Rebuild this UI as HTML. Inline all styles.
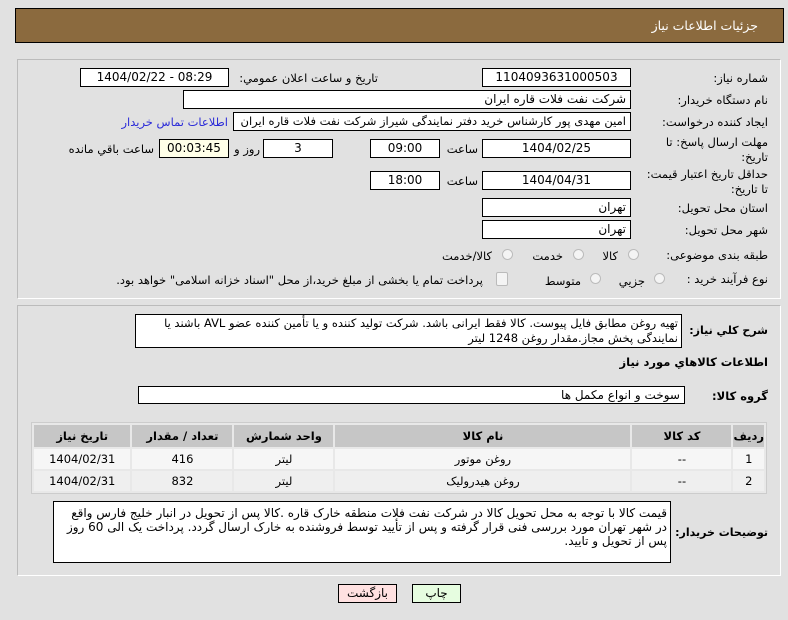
<!DOCTYPE html>
<html><head><meta charset="utf-8"><style>
body{margin:0;width:788px;height:620px;background:#e1e1e1;font-family:"DejaVu Sans","Liberation Sans",sans-serif;font-size:11.5px;color:#000;position:relative;overflow:hidden}
.a{position:absolute}
.box{position:absolute;background:#fff;border:1px solid #000;box-sizing:border-box;height:19px;line-height:17px;text-align:center;font-size:12px}
.r{text-align:right;padding-right:4px}
.lbl{position:absolute;direction:rtl;text-align:right;white-space:nowrap;font-size:11.5px}
.panel{position:absolute;left:17px;width:764px;border:1px solid #bbb;border-right-color:#fff;border-bottom-color:#fff;box-sizing:border-box;background:#e1e1e1}
.rad{position:absolute;width:11px;height:11px;border-radius:50%;border:1px solid #bbb;background:#f4f4f4;box-sizing:border-box}
table{position:absolute;left:31px;top:422px;width:736px;border-collapse:separate;border-spacing:2px;background:#e8e8e8;border:1px solid #ccc;direction:rtl}
td,th{text-align:center;font-size:11.5px;height:20px;padding:0}
th{background:#c6c6c6;height:22px;font-weight:bold}
tr.o td{background:#f6f6f6}tr.e td{background:#efefef}
</style></head><body>
<div class="a" style="left:15px;top:8px;width:769px;height:35px;background:#8b6a3e;border:1px solid #000;box-sizing:border-box"></div>
<div class="lbl" style="right:30px;top:18px;color:#fff;font-size:12.5px">جزئیات اطلاعات نیاز</div>

<div class="panel" style="top:59px;height:240px"></div>
<div class="lbl" style="right:20px;top:71px">شماره نیاز:</div>
<div class="box" style="left:482px;top:68px;width:149px">1104093631000503</div>
<div class="lbl" style="right:410px;top:71px">تاریخ و ساعت اعلان عمومي:</div>
<div class="box" style="left:80px;top:68px;width:149px">1404/02/22 - 08:29</div>

<div class="lbl" style="right:20px;top:93px">نام دستگاه خریدار:</div>
<div class="box r" style="left:183px;top:90px;width:448px;direction:rtl">شرکت نفت فلات قاره ایران</div>

<div class="lbl" style="right:20px;top:115px">ایجاد کننده درخواست:</div>
<div class="box r" style="left:233px;top:112px;width:398px;direction:rtl;white-space:nowrap;overflow:hidden;font-size:11.5px">امین مهدی پور کارشناس خرید دفتر نمایندگی شیراز شرکت نفت فلات قاره ایران</div>
<div class="lbl" style="right:560px;top:115px;color:#2b2bd8">اطلاعات تماس خریدار</div>

<div class="lbl" style="right:20px;top:135px;line-height:15px">مهلت ارسال پاسخ: تا<br>تاریخ:</div>
<div class="box" style="left:482px;top:139px;width:149px">1404/02/25</div>
<div class="lbl" style="right:310px;top:142px">ساعت</div>
<div class="box" style="left:370px;top:139px;width:70px">09:00</div>
<div class="box" style="left:263px;top:139px;width:70px">3</div>
<div class="lbl" style="right:528px;top:142px">روز و</div>
<div class="box" style="left:159px;top:139px;width:70px;background:#ffffe8">00:03:45</div>
<div class="lbl" style="right:634px;top:142px">ساعت باقي مانده</div>

<div class="lbl" style="right:20px;top:167px;line-height:15px">حداقل تاریخ اعتبار قیمت:<br>تا تاریخ:</div>
<div class="box" style="left:482px;top:171px;width:149px">1404/04/31</div>
<div class="lbl" style="right:310px;top:174px">ساعت</div>
<div class="box" style="left:370px;top:171px;width:70px">18:00</div>

<div class="lbl" style="right:20px;top:201px">استان محل تحویل:</div>
<div class="box r" style="left:482px;top:198px;width:149px;direction:rtl">تهران</div>
<div class="lbl" style="right:20px;top:223px">شهر محل تحویل:</div>
<div class="box r" style="left:482px;top:220px;width:149px;direction:rtl">تهران</div>

<div class="lbl" style="right:20px;top:248px">طبقه بندی موضوعی:</div>
<div class="rad" style="left:628px;top:249px"></div><div class="lbl" style="right:170px;top:249px">کالا</div>
<div class="rad" style="left:573px;top:249px"></div><div class="lbl" style="right:225px;top:249px">خدمت</div>
<div class="rad" style="left:502px;top:249px"></div><div class="lbl" style="right:296px;top:249px">کالا/خدمت</div>

<div class="lbl" style="right:20px;top:272px">نوع فرآیند خرید :</div>
<div class="rad" style="left:654px;top:273px"></div><div class="lbl" style="right:143px;top:274px">جزيي</div>
<div class="rad" style="left:590px;top:273px"></div><div class="lbl" style="right:207px;top:274px">متوسط</div>
<div class="a" style="left:496px;top:272px;width:10px;height:12px;border:1px solid #bbb;background:#f4f4f4;border-radius:2px"></div>
<div class="lbl" style="right:305px;top:273px">پرداخت تمام یا بخشی از مبلغ خرید،از محل "اسناد خزانه اسلامی" خواهد بود.</div>

<div class="panel" style="top:305px;height:271px"></div>
<div class="lbl" style="right:20px;top:324px;font-weight:bold;font-size:11px">شرح کلي نیاز:</div>
<div class="box" style="left:135px;top:314px;width:547px;height:34px;text-align:right;direction:rtl;padding:1px 3px;line-height:15px;font-size:11.5px">تهیه روغن مطابق فایل پیوست. کالا فقط ایرانی باشد. شرکت تولید کننده و یا تأمین کننده عضو AVL باشند یا نمایندگی پخش مجاز.مقدار روغن 1248 لیتر</div>
<div class="lbl" style="right:20px;top:355px;font-weight:bold">اطلاعات کالاهاي مورد نیاز</div>
<div class="lbl" style="right:20px;top:389px;font-weight:bold">گروه کالا:</div>
<div class="box r" style="left:138px;top:386px;width:547px;height:18px;direction:rtl">سوخت و انواع مکمل ها</div>

<table>
<tr><th style="width:30px">رديف</th><th style="width:99px">کد کالا</th><th style="width:295px">نام کالا</th><th style="width:99px">واحد شمارش</th><th style="width:100px">تعداد / مقدار</th><th>تاریخ نیاز</th></tr>
<tr class="o"><td>1</td><td>--</td><td>روغن موتور</td><td>لیتر</td><td>416</td><td>1404/02/31</td></tr>
<tr class="e"><td>2</td><td>--</td><td>روغن هیدرولیک</td><td>لیتر</td><td>832</td><td>1404/02/31</td></tr>
</table>

<div class="lbl" style="right:20px;top:526px;font-weight:bold;font-size:11px">توضیحات خریدار:</div>
<div class="box" style="left:53px;top:501px;width:618px;height:62px;text-align:right;direction:rtl;padding:4px 3px;line-height:14px;font-size:12px">قیمت کالا با توجه به محل تحویل کالا در شرکت نفت فلات منطقه خارک قاره .کالا پس از تحویل در انبار خلیج فارس واقع در شهر تهران مورد بررسی فنی قرار گرفته و پس از تأیید توسط فروشنده به خارک ارسال گردد. پرداخت یک الی 60 روز پس از تحویل و تایید.</div>

<div class="box" style="left:338px;top:584px;width:59px;background:#ffe1e1;height:19px;font-size:12px">بازگشت</div>
<div class="box" style="left:412px;top:584px;width:49px;background:#e6fde0;height:19px;font-size:12px">چاپ</div>
</body></html>
